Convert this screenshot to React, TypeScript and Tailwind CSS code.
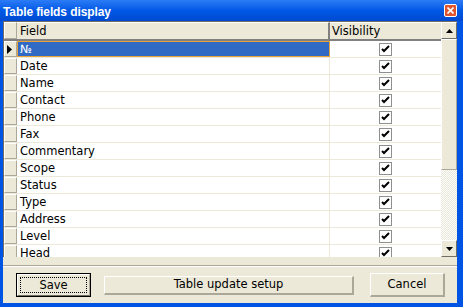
import React from 'react';

const fields = [
  'Date',
  'Name',
  'Contact',
  'Phone',
  'Fax',
  'Commentary',
  'Scope',
  'Status',
  'Type',
  'Address',
  'Level',
  'Head',
];

function CheckBox() {
  return (
    <div className="w-[13px] h-[13px] border border-[#8E8F8F] bg-white flex items-center justify-center">
      <svg width="11" height="11" viewBox="0 0 11 11">
        <path d="M2 5 L4 7 L9 2" stroke="#000" strokeWidth="2" fill="none" />
      </svg>
    </div>
  );
}

function Indicator({ current }: { current?: boolean }) {
  return (
    <div className="w-[13px] h-full shrink-0 bg-[#ECE9D8] border-t border-l border-t-white border-l-white border-r border-b border-r-[#ACA899] border-b-[#ACA899] flex items-center justify-start pl-[2px]">
      {current && (
        <svg width="5" height="9" viewBox="0 0 5 9">
          <path d="M0 0 L5 4.5 L0 9 Z" fill="#000" />
        </svg>
      )}
    </div>
  );
}

function ScrollButton({ up }: { up?: boolean }) {
  return (
    <div className="h-[17px] w-[16px] shrink-0 bg-[#ECE9D8] border-t border-l border-t-white border-l-white border-r border-b border-r-[#716F64] border-b-[#716F64] flex items-center justify-center">
      <svg width="7" height="4" viewBox="0 0 7 4">
        {up ? <path d="M0 4 L3.5 0 L7 4 Z" fill="#000" /> : <path d="M0 0 L3.5 4 L7 0 Z" fill="#000" />}
      </svg>
    </div>
  );
}

export default function App() {
  const font = "font-['DejaVu_Sans',sans-serif] text-[11.5px] text-black";
  return (
    <div className="w-[463px] h-[307px] flex flex-col bg-[#0054E3] overflow-hidden">
      {/* Title bar */}
      <div className="h-[21px] flex items-center justify-between bg-gradient-to-b from-[#2B7CF5] via-[#0058E6] to-[#0049D0] pl-[3px] pr-[6px]">
        <span className="font-['Liberation_Sans',sans-serif] font-bold text-[12px] text-white tracking-[-0.1px] pt-[2px]">
          Table fields display
        </span>
        <div className="w-[13px] h-[13px] rounded-[2px] border border-white bg-[#E0542F] flex items-center justify-center">
          <svg width="7" height="7" viewBox="0 0 7 7">
            <path d="M0.5 0.5 L6.5 6.5 M6.5 0.5 L0.5 6.5" stroke="#fff" strokeWidth="1.6" />
          </svg>
        </div>
      </div>

      {/* Client area */}
      <div className="flex-1 flex flex-col pl-[3px] pr-[6px] pb-[4px]">
        <div className={`flex-1 flex flex-col bg-[#ECE9D8] ${font}`}>
          {/* Grid */}
          <div className="h-[236px] flex border-l border-t border-[#716F64] overflow-hidden">
            <div className="flex-1 flex flex-col bg-white overflow-hidden">
              {/* Header */}
              <div className="h-[19px] shrink-0 flex bg-[#ECE9D8] border-b-2 border-b-[#808080]">
                <Indicator />
                <div className="w-[313px] h-full flex items-center pl-[3px] pt-[1px] border-r-2 border-r-[#808080] border-t border-t-white">
                  Field
                </div>
                <div className="flex-1 h-full flex items-center pl-[2px] pt-[1px] border-t border-t-white">Visibility</div>
              </div>
              {/* First (selected) row */}
              <div className="h-[17px] shrink-0 flex border-b border-b-[#ECE9D8]">
                <Indicator current />
                <div className="w-[313px] h-full flex items-center pl-[2px] pt-[2px] bg-[#316AC5] text-white border border-[#E8A33C]">
                  №
                </div>
                <div className="flex-1 h-full flex items-center justify-center">
                  <CheckBox />
                </div>
              </div>
              {fields.map((f) => (
                <div key={f} className="h-[17px] shrink-0 flex border-b border-b-[#ECE9D8]">
                  <Indicator />
                  <div className="w-[313px] h-full flex items-center pl-[3px] pt-[2px] border-r border-r-[#ECE9D8]">{f}</div>
                  <div className="flex-1 h-full flex items-center justify-center">
                    <CheckBox />
                  </div>
                </div>
              ))}
            </div>
            {/* Vertical scrollbar */}
            <div className="w-[16px] flex flex-col bg-[repeating-conic-gradient(#FEFEFB_0%_25%,#E9E7DB_0%_50%)] bg-[length:2px_2px]">
              <ScrollButton up />
              <div className="h-[131px] bg-[#ECE9D8] border-t border-l border-t-white border-l-white border-r border-b border-r-[#ACA899] border-b-[#ACA899]" />
              <div className="flex-1" />
              <ScrollButton />
            </div>
          </div>

          {/* Separator */}
          <div className="h-[8px]" />
          <div className="h-[2px] border-t border-t-[#ACA899] border-b border-b-white" />

          {/* Buttons */}
          <div className="flex-1 flex items-center pl-[13px]">
            <div className="w-[75px] h-[24px] border border-black bg-[#ECE9D8] flex">
              <div className="flex-1 border-t border-l border-t-white border-l-white border-r border-b border-r-[#ACA899] border-b-[#716F64] p-[2px] flex">
                <div className="flex-1 border border-dotted border-black flex items-center justify-center pt-[1px]">Save</div>
              </div>
            </div>
            <div className="ml-[13px] w-[250px] h-[19px] bg-[#ECE9D8] border-t border-l border-t-white border-l-white border-r-2 border-b-2 border-r-[#ACA899] border-b-[#ACA899] flex items-center justify-center pt-[1px]">
              Table update setup
            </div>
            <div className="ml-[16px] w-[75px] h-[24px] bg-[#ECE9D8] border-t border-l border-t-white border-l-white border-r-2 border-b-2 border-r-[#ACA899] border-b-[#ACA899] flex items-center justify-center pt-[1px]">
              Cancel
            </div>
          </div>
        </div>
      </div>
    </div>
  );
}
